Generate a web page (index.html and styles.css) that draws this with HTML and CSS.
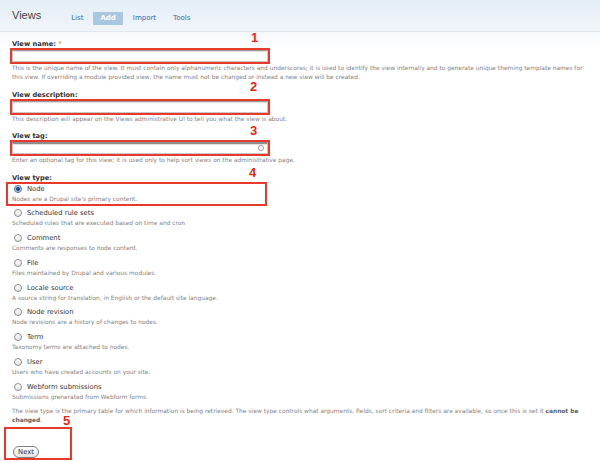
FILE: index.html
```html
<!DOCTYPE html>
<html lang="en">
<head>
<meta charset="utf-8">
<title>Views - Add</title>
<link rel="stylesheet" href="styles.css">
</head>
<body>
<div class="page">
  <header class="header">
    <h1 class="title">Views</h1>
    <nav class="tabs">
      <a class="tab">List</a>
      <a class="tab active">Add</a>
      <a class="tab">Import</a>
      <a class="tab">Tools</a>
    </nav>
  </header>

  <main class="content">
    <div class="field">
      <label class="label">View name: <span class="req">*</span></label>
      <div class="input-wrap"><input class="text-input" type="text"></div>
      <div class="desc">This is the unique name of the view. It must contain only alphanumeric characters and underscores; it is used to identify the view internally and to generate unique theming template names for this view. If overriding a module provided view, the name must not be changed or instead a new view will be created.</div>
    </div>

    <div class="field">
      <label class="label">View description:</label>
      <div class="input-wrap"><input class="text-input" type="text"></div>
      <div class="desc">This description will appear on the Views administrative UI to tell you what the view is about.</div>
    </div>

    <div class="field">
      <label class="label">View tag:</label>
      <div class="input-wrap"><input class="text-input tag-input" type="text"><span class="throbber"></span></div>
      <div class="desc">Enter an optional tag for this view; it is used only to help sort views on the administrative page.</div>
    </div>

    <div class="field">
      <label class="label">View type:</label>
      <div class="options">
        <div class="option marked">
          <div class="option-label"><span class="radio checked"></span>Node</div>
          <div class="option-desc">Nodes are a Drupal site's primary content.</div>
        </div>
        <div class="option">
          <div class="option-label"><span class="radio"></span>Scheduled rule sets</div>
          <div class="option-desc">Scheduled rules that are executed based on time and cron</div>
        </div>
        <div class="option">
          <div class="option-label"><span class="radio"></span>Comment</div>
          <div class="option-desc">Comments are responses to node content.</div>
        </div>
        <div class="option">
          <div class="option-label"><span class="radio"></span>File</div>
          <div class="option-desc">Files maintained by Drupal and various modules.</div>
        </div>
        <div class="option">
          <div class="option-label"><span class="radio"></span>Locale source</div>
          <div class="option-desc">A source string for translation, in English or the default site language.</div>
        </div>
        <div class="option">
          <div class="option-label"><span class="radio"></span>Node revision</div>
          <div class="option-desc">Node revisions are a history of changes to nodes.</div>
        </div>
        <div class="option">
          <div class="option-label"><span class="radio"></span>Term</div>
          <div class="option-desc">Taxonomy terms are attached to nodes.</div>
        </div>
        <div class="option">
          <div class="option-label"><span class="radio"></span>User</div>
          <div class="option-desc">Users who have created accounts on your site.</div>
        </div>
        <div class="option">
          <div class="option-label"><span class="radio"></span>Webform submissions</div>
          <div class="option-desc">Submissions grenerated from Webform forms.</div>
        </div>
      </div>
      <div class="desc">The view type is the primary table for which information is being retrieved. The view type controls what arguments, fields, sort criteria and filters are available, so once this is set it <b>cannot be</b><br><b>changed</b>.</div>
    </div>

    <div class="actions">
      <button class="button" type="button">Next</button>
    </div>
  </main>

  <span class="num n1">1</span>
  <span class="num n2">2</span>
  <span class="num n3">3</span>
  <span class="num n4">4</span>
  <span class="num n5">5</span>
</div>
</body>
</html>
```

FILE: styles.css
```css
* { box-sizing: border-box; }

html, body {
  margin: 0;
  padding: 0;
  background: #fff;
}

body {
  font-family: "DejaVu Sans", Verdana, sans-serif;
  color: #333;
}

.page {
  position: relative;
  width: 600px;
  height: 461px;
  overflow: hidden;
}

.header {
  display: flex;
  align-items: flex-start;
  height: 32px;
  padding-left: 12px;
  background: linear-gradient(#e4edf6, #f1f5fa);
  border-bottom: 1px solid #dfe8f1;
}

.title {
  margin: 9px 0 0;
  font-family: "Liberation Sans", Arial, sans-serif;
  font-weight: normal;
  font-size: 11px;
  line-height: 13px;
  color: #444;
}

.tabs {
  display: flex;
  gap: 3px;
  margin: 12px 0 0 23px;
}

.tab {
  display: block;
  height: 13px;
  padding: 0 7px;
  font-size: 7px;
  line-height: 13px;
  color: #2f6cae;
}

.tab.active {
  background: #a9c7e0;
  color: #fff;
  font-weight: bold;
}

.content {
  padding: 8px 12px 0;
  background: linear-gradient(#f5f8fc, #fff 18px);
}

.field {
  margin-bottom: 8.5px;
}

.label {
  display: block;
  font-size: 6.7px;
  font-weight: bold;
  line-height: 8px;
  color: #333;
}

.req {
  color: #f0a030;
}

.input-wrap {
  position: relative;
  width: 256px;
  margin: 2px 0;
}

.text-input {
  display: block;
  width: 256px;
  height: 12px;
  margin: 0;
  padding: 0;
  border: 1px solid #c9c9c9;
  border-top-color: #9c9c9c;
  background: #fff;
  box-shadow: inset 0 1px 1px #ddd;
  outline: 2px solid #e8392a;
  outline-offset: 0;
}

.tag-input {
  border-top: 2px solid #8e8e8e;
}

.throbber {
  position: absolute;
  right: 4px;
  top: 3px;
  width: 6px;
  height: 6px;
  border: 1px solid #999;
  border-radius: 50%;
}

.desc {
  width: 572px;
  font-size: 5.9px;
  line-height: 9px;
  color: #828282;
}

.desc b {
  color: #5e5e5e;
}

.options {
  margin-top: 2px;
}

.option {
  margin-bottom: 4.8px;
}

.option.marked {
  width: 257px;
  margin-left: -4px;
  padding-left: 4px;
  outline: 2px solid #e8392a;
}

.option-label {
  display: flex;
  align-items: center;
  height: 10px;
  font-size: 6.8px;
  line-height: 10px;
  color: #333;
}

.radio {
  width: 8px;
  height: 8px;
  margin: 0 5px 0 2px;
  border: 1px solid #8d8d8d;
  border-radius: 50%;
  background: linear-gradient(#fdfdfd, #e6e6e6);
}

.radio.checked {
  border-color: #4c6e96;
  background: radial-gradient(circle, #1e4f92 0 1.6px, #a9c2de 2.2px, #c9d9ea 3px);
}

.option-desc {
  font-size: 5.9px;
  line-height: 10px;
  color: #828282;
}

.actions {
  width: 64px;
  height: 29px;
  margin: -4px 0 0 -6px;
  padding: 17px 0 0 7px;
  outline: 2px solid #e8392a;
}

.button {
  display: block;
  width: 26px;
  height: 12px;
  margin: 0;
  padding: 0;
  border: 1px solid #7d7d7d;
  border-radius: 6px;
  background: linear-gradient(#ffffff, #e4e4e4);
  font-family: "DejaVu Sans", Verdana, sans-serif;
  font-size: 6.8px;
  line-height: 10px;
  color: #333;
}

.num {
  position: absolute;
  font-family: "Liberation Sans", Arial, sans-serif;
  font-weight: bold;
  font-size: 13px;
  line-height: 9px;
  color: #e5260f;
}

.n1 { left: 251px; top: 33px; }
.n2 { left: 250px; top: 82px; }
.n3 { left: 250px; top: 126px; }
.n4 { left: 249px; top: 168px; }
.n5 { left: 63px; top: 415.5px; }
```
